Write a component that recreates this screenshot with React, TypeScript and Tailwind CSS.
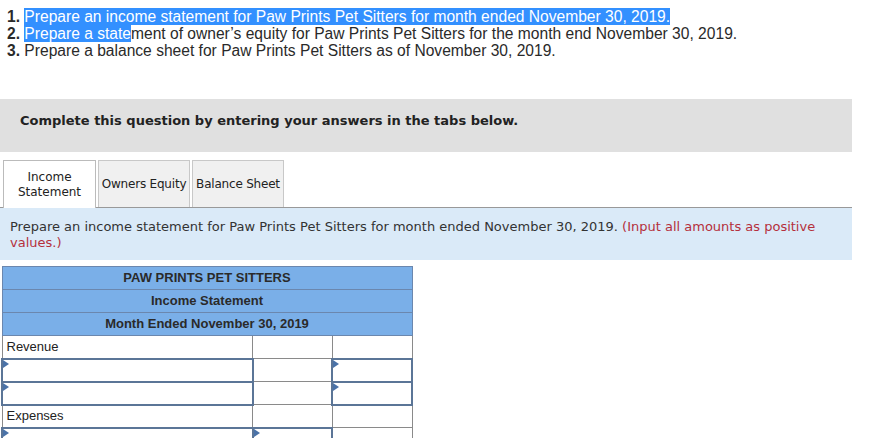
const LINES = [
  {
    n: '1.',
    parts: [{ t: 'Prepare an income statement for Paw Prints Pet Sitters for month ended November 30, 2019.', hl: true }],
  },
  {
    n: '2.',
    parts: [
      { t: 'Prepare a state', hl: true },
      { t: 'ment of owner’s equity for Paw Prints Pet Sitters for the month end November 30, 2019.', hl: false },
    ],
  },
  {
    n: '3.',
    parts: [{ t: 'Prepare a balance sheet for Paw Prints Pet Sitters as of November 30, 2019.', hl: false }],
  },
]

const TABS = ['Income Statement', 'Owners Equity', 'Balance Sheet']

function Arrow() {
  return <span className="absolute left-0 top-0 h-0 w-0 border-y-[4px] border-l-[6px] border-y-transparent border-l-[#4a72a8]" />
}

function InputCell({ w, arrow = true }: { w: string; arrow?: boolean }) {
  return (
    <td className={`${w} relative h-[23px] border-2 border-[#5b7597] p-0`}>
      {arrow && <Arrow />}
    </td>
  )
}

function PlainCell({ w, children }: { w: string; children?: React.ReactNode }) {
  return (
    <td className={`${w} h-[23px] border border-[#8a8a8a] px-[4px] py-0 text-[13px] text-[#222]`}>{children}</td>
  )
}

export default function App() {
  return (
    <div className="h-[438px] w-[881px] overflow-hidden bg-white">
      <ol className="pl-[7px] pt-[8px] font-['Liberation_Sans',Arial,sans-serif] text-[15.6px] leading-[17px] text-[#2a2a2a]">
        {LINES.map((line) => (
          <li key={line.n} className="whitespace-nowrap">
            <span className="font-bold">{line.n}</span>{' '}
            {line.parts.map((p, i) => (
              <span key={i} className={p.hl ? 'bg-[#3390ff] text-white' : ''}>
                {p.t}
              </span>
            ))}
          </li>
        ))}
      </ol>

      <div className="mt-[40px] h-[53px] w-[852px] bg-[#e0e0e0] pl-[20px] pt-[14px] font-['DejaVu_Sans',Verdana,sans-serif] text-[13px] font-bold leading-[16px] text-[#222]">
        Complete this question by entering your answers in the tabs below.
      </div>

      <div className="mt-[8px] flex items-end gap-[2px] pl-[3px] font-['DejaVu_Sans',Verdana,sans-serif] text-[12px] leading-[15px] text-[#222]">
        {TABS.map((tab, i) => (
          <div
            key={tab}
            className={
              i === 0
                ? 'relative -mb-px flex h-[48px] w-[93px] items-center justify-center border border-b-0 border-[#bbb] bg-white text-center'
                : 'flex h-[47px] w-[92px] items-center justify-center whitespace-nowrap border border-b-0 border-[#c8c8c8] bg-[#f0f0f0] text-center tracking-[-0.2px]'
            }
          >
            {i === 0 ? (
              <span>
                Income
                <br />
                Statement
              </span>
            ) : (
              tab
            )}
          </div>
        ))}
      </div>

      <div className="w-[852px] border-t border-[#999] bg-[#daeaf8] px-[10px] pb-[9px] pt-[11px] font-['DejaVu_Sans',Verdana,sans-serif] text-[13px] leading-[16px] text-[#333]">
        Prepare an income statement for Paw Prints Pet Sitters for month ended November 30, 2019.{' '}
        <span className="text-[#b5303c]">(Input all amounts as positive values.)</span>
      </div>

      <table className="ml-[1px] mt-[6px] w-[412px] border-collapse font-['Liberation_Sans',Arial,sans-serif]">
        <tbody>
          {['PAW PRINTS PET SITTERS', 'Income Statement', 'Month Ended November 30, 2019'].map((h) => (
            <tr key={h}>
              <td
                colSpan={3}
                className="h-[23px] border border-[#6b87ae] bg-[#7aafe8] p-0 text-center text-[13px] font-bold text-[#2a2a2a]"
              >
                {h}
              </td>
            </tr>
          ))}
          <tr>
            <PlainCell w="w-[252px]">Revenue</PlainCell>
            <PlainCell w="w-[80px]" />
            <PlainCell w="w-[80px]" />
          </tr>
          {[0, 1].map((r) => (
            <tr key={r}>
              <InputCell w="w-[252px]" />
              <PlainCell w="w-[80px]" />
              <InputCell w="w-[80px]" />
            </tr>
          ))}
          <tr>
            <PlainCell w="w-[252px]">Expenses</PlainCell>
            <PlainCell w="w-[80px]" />
            <PlainCell w="w-[80px]" />
          </tr>
          <tr>
            <InputCell w="w-[252px]" />
            <InputCell w="w-[80px]" />
            <PlainCell w="w-[80px]" />
          </tr>
        </tbody>
      </table>
    </div>
  )
}
